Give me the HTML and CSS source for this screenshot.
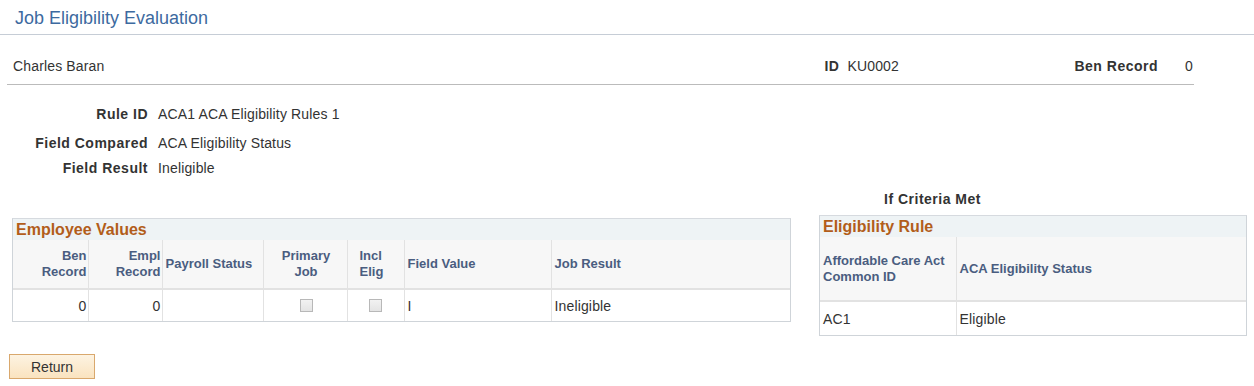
FILE: index.html
```html
<!DOCTYPE html>
<html lang="en">
<head>
    <meta charset="UTF-8">
    <title>Job Eligibility Evaluation</title>
    <link rel="stylesheet" href="styles.css">
</head>
<body>
    <header class="page-title"><h1>Job Eligibility Evaluation</h1></header>

    <div class="emp-bar">
        <span class="emp-name">Charles Baran</span>
        <span class="emp-id"><b>ID</b> KU0002</span>
        <span class="emp-ben"><b>Ben Record</b> 0</span>
    </div>

    <div class="fields">
        <div class="lbl r1">Rule ID</div><div class="val">ACA1 ACA Eligibility Rules 1</div>
        <div class="lbl r2">Field Compared</div><div class="val">ACA Eligibility Status</div>
        <div class="lbl">Field Result</div><div class="val">Ineligible</div>
    </div>

    <div class="grids">
        <div class="grid emp-grid">
            <div class="grid-title">Employee Values</div>
            <table>
                <tr class="head">
                    <th class="num w-ben">Ben<br>Record</th>
                    <th class="num w-empl">Empl<br>Record</th>
                    <th class="w-pay">Payroll Status</th>
                    <th class="mid w-prim">Primary<br>Job</th>
                    <th class="w-incl">Incl<br>Elig</th>
                    <th class="w-fv">Field Value</th>
                    <th>Job Result</th>
                </tr>
                <tr class="row">
                    <td class="num">0</td>
                    <td class="num">0</td>
                    <td></td>
                    <td class="mid"><span class="chk"></span></td>
                    <td class="chk-cell"><span class="chk"></span></td>
                    <td>I</td>
                    <td>Ineligible</td>
                </tr>
            </table>
        </div>

        <div class="rule-side">
            <div class="crit">If Criteria Met</div>
            <div class="grid rule-grid">
                <div class="grid-title">Eligibility Rule</div>
                <table>
                    <tr class="head tall">
                        <th class="w-aca">Affordable Care Act<br>Common ID</th>
                        <th>ACA Eligibility Status</th>
                    </tr>
                    <tr class="row tall-row">
                        <td>AC1</td>
                        <td>Eligible</td>
                    </tr>
                </table>
            </div>
        </div>
    </div>

    <button class="btn">Return</button>
</body>
</html>
```

FILE: styles.css
```css
body {
    margin: 0;
    font: normal 14px "Liberation Sans", Arial, sans-serif;
    color: #333;
    background: #fff;
    letter-spacing: 0.15px;
}

b { letter-spacing: 0.5px; }

.page-title {
    border-bottom: 1px solid #c6cdd6;
    height: 34px;
}

.page-title h1 {
    margin: 0;
    padding: 8px 0 0 15px;
    font-size: 18px;
    font-weight: normal;
    color: #3d6a9f;
    letter-spacing: 0;
}

.emp-bar {
    display: flex;
    align-items: flex-end;
    margin: 0 60px 0 7px;
    height: 50px;
    border-bottom: 1px solid #bbb;
    padding-left: 6px;
    padding-bottom: 10px;
    box-sizing: border-box;
}

.emp-name { flex: 1; }
.emp-id { width: 250px; }
.emp-id b { margin-right: 4px; }
.emp-ben b { margin-right: 23px; }
.emp-ben { padding-right: 1px; }

.fields {
    display: grid;
    grid-template-columns: 148px auto;
    column-gap: 10px;
    margin-top: 21px;
    line-height: 16px;
}

.fields .lbl {
    font-weight: bold;
    text-align: right;
    letter-spacing: 0.5px;
}

.fields .r1 { margin-bottom: 13px; }
.fields .r2 { margin-bottom: 9px; }

.grids {
    display: flex;
    align-items: flex-end;
    margin-top: 15px;
    padding-left: 12px;
}

.grid {
    border: 1px solid #cfd4d9;
    border-top-color: #d6dadf;
}

.grid-title {
    background: #eef3f5;
    color: #b25d1a;
    font-weight: bold;
    font-size: 16px;
    height: 21px;
    line-height: 21px;
    padding-left: 3px;
    letter-spacing: 0;
}

table {
    border-collapse: collapse;
    width: 100%;
    table-layout: fixed;
}

th, td {
    box-sizing: border-box;
    border-left: 1px solid #e2e2e2;
    padding: 0 1px 0 3px;
    text-align: left;
}

th:first-child, td:first-child { border-left: none; }

tr.head {
    background: #f7f7f7;
    border-bottom: 2px solid #e2e2e2;
    height: 49px;
}

tr.head.tall { height: 64px; }

th {
    font-size: 13px;
    font-weight: bold;
    color: #4a5d80;
    line-height: 16px;
    letter-spacing: 0;
}

tr.row { height: 32px; background: #fff; }
tr.tall-row { height: 34px; }

th.num, td.num { text-align: right; }
th.mid, td.mid { text-align: center; }

.w-ben { width: 75px; }
.w-empl { width: 74px; }
.w-pay { width: 101px; }
.w-prim { width: 84px; }
.w-incl { width: 57px; padding-left: 12px; }
.w-fv { width: 147px; }
.w-aca { width: 136px; }

.chk {
    display: inline-block;
    width: 11px;
    height: 11px;
    border: 1px solid #b8b8b8;
    background: linear-gradient(#f2f2f2, #e4e4e4);
    vertical-align: -1px;
}

.chk-cell { padding-left: 21px; }

.emp-grid { width: 777px; margin-bottom: 14px; }

.rule-side {
    margin-left: 28px;
    width: 428px;
}

.crit {
    font-weight: bold;
    margin-left: 65px;
    margin-bottom: 8px;
    letter-spacing: 0.5px;
}

.btn {
    display: block;
    margin: 18px 0 0 9px;
    width: 86px;
    height: 25px;
    border: 1px solid #d9a86d;
    background: linear-gradient(#fdf3e2, #fae3bf);
    font: normal 14px "Liberation Sans", Arial, sans-serif;
    color: #333;
    padding: 0;
}
```
